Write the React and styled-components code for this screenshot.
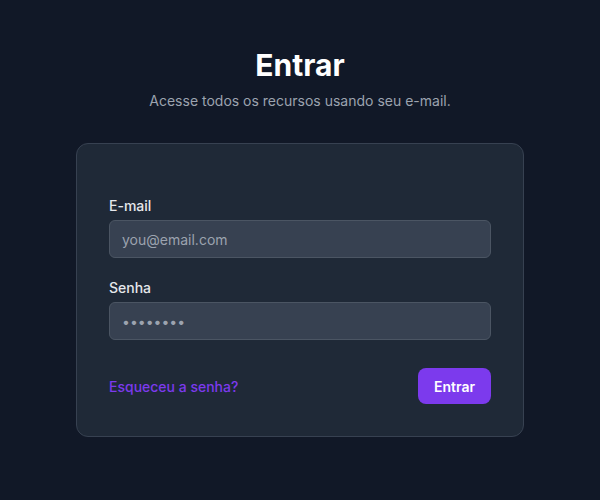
import React from "react";
import styled, { createGlobalStyle } from "styled-components";

const GlobalStyle = createGlobalStyle`
  * { box-sizing: border-box; }
  body {
    margin: 0;
    background: #111827;
    font-family: Inter, "Noto Sans", sans-serif;
  }
`;

const Page = styled.div`
  min-height: 500px;
  display: flex;
  flex-direction: column;
  align-items: center;
  padding-top: 47px;
`;

const Title = styled.h1`
  margin: 0;
  font-size: 30px;
  line-height: 36px;
  font-weight: 700;
  color: #ffffff;
`;

const Subtitle = styled.p`
  margin: 8px 0 0;
  font-size: 14px;
  line-height: 20px;
  color: #9ca3af;
`;

const Card = styled.form`
  margin-top: 32px;
  width: 448px;
  background: #1f2937;
  border: 1px solid #374151;
  border-radius: 12px;
  padding: 52px 32px 32px;
  display: flex;
  flex-direction: column;
`;

const Field = styled.div`
  display: flex;
  flex-direction: column;
  gap: 4px;
  & + & {
    margin-top: 20px;
  }
`;

const Label = styled.label`
  font-size: 14px;
  line-height: 20px;
  font-weight: 500;
  color: #e5e7eb;
`;

const Input = styled.input`
  height: 38px;
  width: 100%;
  padding: 0 12px;
  background: #374151;
  border: 1px solid #4b5563;
  border-radius: 6px;
  font-family: inherit;
  font-size: 14px;
  color: #f3f4f6;
  outline: none;
  &::placeholder {
    color: #9ca3af;
  }
`;

const Actions = styled.div`
  margin-top: 28px;
  display: flex;
  align-items: center;
  justify-content: space-between;
`;

const Link = styled.a`
  font-size: 14px;
  font-weight: 500;
  color: #7c3aed;
  text-decoration: none;
`;

const Button = styled.button`
  height: 36px;
  padding: 0 16px;
  border: none;
  border-radius: 8px;
  background: #7c3aed;
  color: #ffffff;
  font-family: inherit;
  font-size: 14px;
  font-weight: 600;
`;

export default function App() {
  return (
    <>
      <GlobalStyle />
      <Page>
        <Title>Entrar</Title>
        <Subtitle>Acesse todos os recursos usando seu e-mail.</Subtitle>
        <Card onSubmit={(e) => e.preventDefault()}>
          <Field>
            <Label htmlFor="email">E-mail</Label>
            <Input id="email" type="email" placeholder="you@email.com" />
          </Field>
          <Field>
            <Label htmlFor="senha">Senha</Label>
            <Input id="senha" type="password" placeholder="••••••••" />
          </Field>
          <Actions>
            <Link href="#">Esqueceu a senha?</Link>
            <Button type="submit">Entrar</Button>
          </Actions>
        </Card>
      </Page>
    </>
  );
}
